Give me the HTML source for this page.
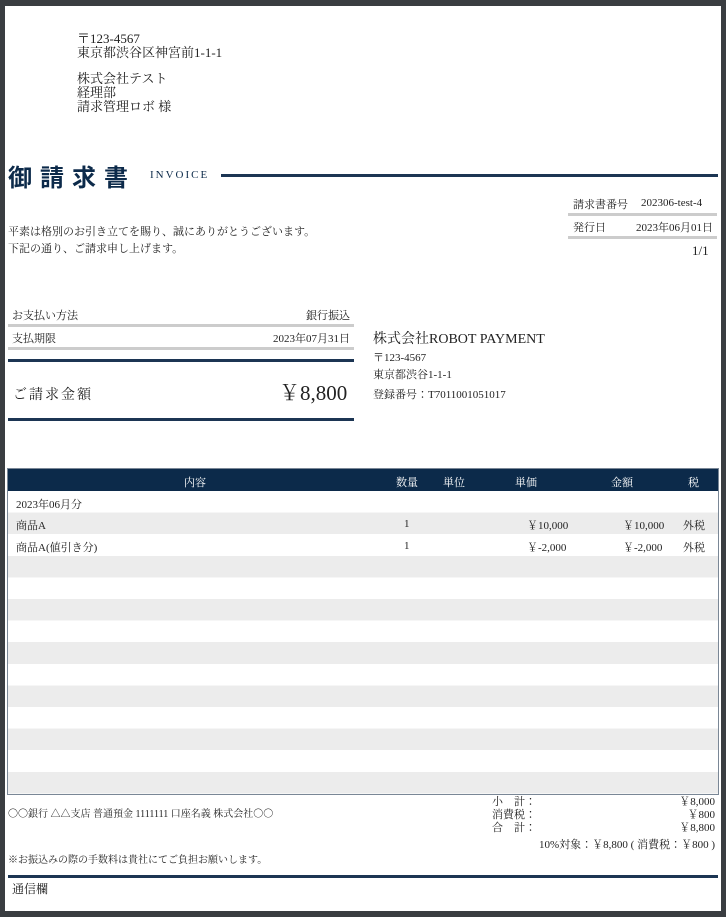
<!DOCTYPE html>
<html><head><meta charset="utf-8"><style>
*{margin:0;padding:0;box-sizing:border-box}
body{width:726px;height:917px;background:#3a3d41;position:relative;overflow:hidden;font-family:"Liberation Serif","Noto Serif CJK JP","Noto Serif CJK SC",serif;color:#222}
.page{position:absolute;left:5px;top:6px;width:716px;height:905px;background:#fff}
.a{position:absolute;white-space:nowrap}
.s11{font-size:11px}
.nav{background:#0c2a4a}
</style></head><body>
<div class="page"></div>
<div class="a" style="left:77px;top:32px;font-size:13px;line-height:14px">〒123-4567<br>東京都渋谷区神宮前1-1-1<br><div style="height:12px"></div>株式会社テスト<br>経理部<br>請求管理ロボ 様</div>

<div class="a" style="left:8px;top:158px;font-size:24px;font-weight:bold;color:#0c2a4a;letter-spacing:8px;font-family:'Noto Sans CJK JP',sans-serif;line-height:36px">御請求書</div>
<div class="a" style="left:150px;top:169px;font-size:11px;letter-spacing:2px;color:#0c2a4a">INVOICE</div>
<div class="a" style="left:221px;top:174px;width:497px;height:3px;background:#1c3553"></div>

<div class="a s11" style="left:573px;top:196px">請求書番号</div>
<div class="a s11" style="left:641px;top:197px">202306-test-4</div>
<div class="a" style="left:568px;top:213px;width:149px;height:3px;background:#ccc"></div>
<div class="a s11" style="left:573px;top:219px">発行日</div>
<div class="a s11" style="left:636px;top:219px">2023年06月01日</div>
<div class="a" style="left:568px;top:236px;width:149px;height:3px;background:#ccc"></div>
<div class="a" style="left:692px;top:243px;font-size:13px">1/1</div>
<div class="a s11" style="left:8px;top:224px;line-height:17px">平素は格別のお引き立てを賜り、誠にありがとうございます。<br>下記の通り、ご請求申し上げます。</div>

<div class="a s11" style="left:12px;top:307px">お支払い方法</div>
<div class="a s11" style="left:306px;top:307px">銀行振込</div>
<div class="a" style="left:8px;top:324px;width:346px;height:3px;background:#ccc"></div>
<div class="a s11" style="left:12px;top:330px">支払期限</div>
<div class="a s11" style="left:273px;top:330px">2023年07月31日</div>
<div class="a" style="left:8px;top:347px;width:346px;height:3px;background:#ccc"></div>
<div class="a" style="left:8px;top:359px;width:346px;height:3px;background:#1c3553"></div>
<div class="a" style="left:13px;top:384px;font-size:14px;letter-spacing:2px">ご請求金額</div>
<div class="a" style="left:279px;top:377px;font-size:21px">￥8,800</div>
<div class="a" style="left:8px;top:418px;width:346px;height:3px;background:#1c3553"></div>

<div class="a" style="left:373px;top:328px;font-size:14px">株式会社ROBOT PAYMENT</div>
<div class="a s11" style="left:373px;top:350px;line-height:17px">〒123-4567<br>東京都渋谷1-1-1</div>
<div class="a s11" style="left:373px;top:386px">登録番号：T7011001051017</div>

<div class="a" style="left:7px;top:468px;width:712px;height:327px;border:1px solid #7a8796;background:repeating-linear-gradient(#fff 0 21.6px,#ececec 21.6px 43.2px);background-position:0 22px"></div>
<div class="a nav" style="left:8px;top:469px;width:710px;height:22px"></div>
<div class="a" style="left:8px;top:491px;width:710px;height:21px;background:#fff"></div>
<div class="a s11" style="color:#fff;left:184px;top:474px">内容</div>
<div class="a s11" style="color:#fff;left:396px;top:474px">数量</div>
<div class="a s11" style="color:#fff;left:443px;top:474px">単位</div>
<div class="a s11" style="color:#fff;left:515px;top:474px">単価</div>
<div class="a s11" style="color:#fff;left:611px;top:474px">金額</div>
<div class="a s11" style="color:#fff;left:688px;top:474px">税</div>
<div class="a s11" style="left:16px;top:496px">2023年06月分</div>
<div class="a s11" style="left:16px;top:517px">商品A</div>
<div class="a s11" style="left:404px;top:518px">1</div>
<div class="a s11" style="left:527px;top:517px">￥10,000</div>
<div class="a s11" style="left:623px;top:517px">￥10,000</div>
<div class="a s11" style="left:683px;top:517px">外税</div>
<div class="a s11" style="left:16px;top:539px">商品A(値引き分)</div>
<div class="a s11" style="left:404px;top:540px">1</div>
<div class="a s11" style="left:527px;top:539px">￥-2,000</div>
<div class="a s11" style="left:623px;top:539px">￥-2,000</div>
<div class="a s11" style="left:683px;top:539px">外税</div>

<div class="a" style="left:8px;top:805px;font-size:10px">〇〇銀行 △△支店 普通預金 1111111 口座名義 株式会社〇〇</div>
<div class="a" style="left:8px;top:851px;font-size:10px">※お振込みの際の手数料は貴社にてご負担お願いします。</div>
<div class="a" style="left:492px;top:796px;font-size:11px;line-height:13px">小　計：<br>消費税：<br>合　計：</div>
<div class="a" style="right:11px;top:796px;font-size:11px;line-height:13px;text-align:right">￥8,000<br>￥800<br>￥8,800</div>
<div class="a" style="right:11px;top:836px;font-size:11px">10%対象：￥8,800 ( 消費税：￥800 )</div>
<div class="a" style="left:8px;top:875px;width:710px;height:3px;background:#1c3553"></div>
<div class="a" style="left:12px;top:880px;font-size:12px">通信欄</div>
</body></html>
